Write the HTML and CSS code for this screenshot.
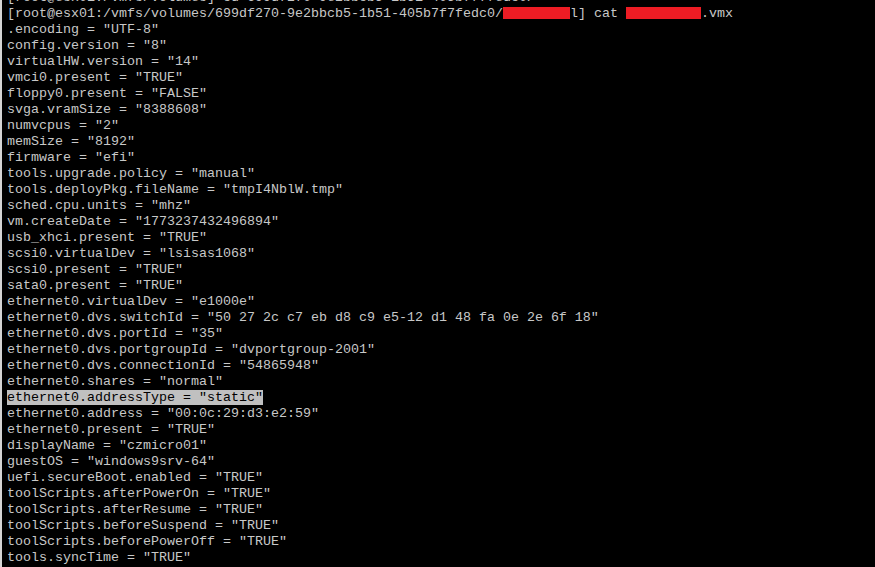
FILE: index.html
```html
<!DOCTYPE html>
<html>
<head>
<meta charset="utf-8">
<link rel="stylesheet" href="styles.css">
</head>
<body>
<div class="term">
<div class="line">[root@esx01:/vmfs/volumes] cd 699df270-9e2bbcb5-1b51-405b7f7fedc0/</div>
<div class="line">[root@esx01:/vmfs/volumes/699df270-9e2bbcb5-1b51-405b7f7fedc0/<span class="redact r1"></span>l] cat <span class="redact r2"></span>.vmx</div>
<div class="line">.encoding = "UTF-8"</div>
<div class="line">config.version = "8"</div>
<div class="line">virtualHW.version = "14"</div>
<div class="line">vmci0.present = "TRUE"</div>
<div class="line">floppy0.present = "FALSE"</div>
<div class="line">svga.vramSize = "8388608"</div>
<div class="line">numvcpus = "2"</div>
<div class="line">memSize = "8192"</div>
<div class="line">firmware = "efi"</div>
<div class="line">tools.upgrade.policy = "manual"</div>
<div class="line">tools.deployPkg.fileName = "tmpI4NblW.tmp"</div>
<div class="line">sched.cpu.units = "mhz"</div>
<div class="line">vm.createDate = "1773237432496894"</div>
<div class="line">usb_xhci.present = "TRUE"</div>
<div class="line">scsi0.virtualDev = "lsisas1068"</div>
<div class="line">scsi0.present = "TRUE"</div>
<div class="line">sata0.present = "TRUE"</div>
<div class="line">ethernet0.virtualDev = "e1000e"</div>
<div class="line">ethernet0.dvs.switchId = "50 27 2c c7 eb d8 c9 e5-12 d1 48 fa 0e 2e 6f 18"</div>
<div class="line">ethernet0.dvs.portId = "35"</div>
<div class="line">ethernet0.dvs.portgroupId = "dvportgroup-2001"</div>
<div class="line">ethernet0.dvs.connectionId = "54865948"</div>
<div class="line">ethernet0.shares = "normal"</div>
<div class="line"><span class="sel">ethernet0.addressType = "static"</span></div>
<div class="line">ethernet0.address = "00:0c:29:d3:e2:59"</div>
<div class="line">ethernet0.present = "TRUE"</div>
<div class="line">displayName = "czmicro01"</div>
<div class="line">guestOS = "windows9srv-64"</div>
<div class="line">uefi.secureBoot.enabled = "TRUE"</div>
<div class="line">toolScripts.afterPowerOn = "TRUE"</div>
<div class="line">toolScripts.afterResume = "TRUE"</div>
<div class="line">toolScripts.beforeSuspend = "TRUE"</div>
<div class="line">toolScripts.beforePowerOff = "TRUE"</div>
<div class="line">tools.syncTime = "TRUE"</div>
</div>
</body>
</html>
```
FILE: styles.css
```css
html, body {
  margin: 0;
  padding: 0;
  background: #000;
  height: 100%;
  overflow: hidden;
}
body {
  border-left: 2px solid #d4d4d4;
  box-sizing: border-box;
}
.term {
  margin-top: -10px;
  padding-left: 5px;
  font-family: "Liberation Mono", "Courier New", monospace;
  font-size: 13.333px;
  line-height: 16px;
  color: #c8c8c8;
}
.line {
  white-space: pre;
  height: 16px;
}
.sel {
  background: #c0c0c0;
  color: #000;
}
.redact {
  display: inline-block;
  height: 12px;
  background: #ed1c24;
  vertical-align: -2px;
}
.r1 { width: 67px; }
.r2 { width: 75px; }
```
